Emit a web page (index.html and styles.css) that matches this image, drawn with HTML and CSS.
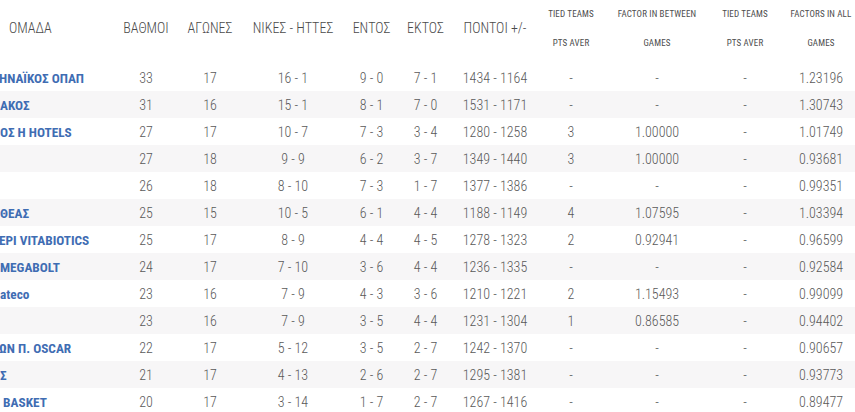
FILE: index.html
```html
<!DOCTYPE html>
<html lang="el">
<head>
<meta charset="utf-8">
<title>Βαθμολογία</title>
<link rel="stylesheet" href="styles.css">
</head>
<body>
<table class="standings">
  <colgroup>
    <col class="c-team"><col class="c-pts"><col class="c-gp"><col class="c-wl"><col class="c-home"><col class="c-away"><col class="c-score"><col class="c-tied"><col class="c-fbg"><col class="c-tied2"><col class="c-fall">
  </colgroup>
  <thead>
    <tr>
      <th class="team-h">ΟΜΑΔΑ</th>
      <th>ΒΑΘΜΟΙ</th>
      <th>ΑΓΩΝΕΣ</th>
      <th>ΝΙΚΕΣ - ΗΤΤΕΣ</th>
      <th>ΕΝΤΟΣ</th>
      <th>ΕΚΤΟΣ</th>
      <th>ΠΟΝΤΟΙ +/-</th>
      <th class="small"><span>TIED TEAMS</span><span>PTS AVER</span></th>
      <th class="small"><span>FACTOR IN BETWEEN</span><span>GAMES</span></th>
      <th class="small"><span>TIED TEAMS</span><span>PTS AVER</span></th>
      <th class="small"><span>FACTORS IN ALL</span><span>GAMES</span></th>
    </tr>
  </thead>
  <tbody>
    <tr><td class="team"><span class="cut c1">ΗΝΑΪΚΟΣ ΟΠΑΠ</span></td><td>33</td><td>17</td><td>16 - 1</td><td>9 - 0</td><td>7 - 1</td><td>1434 - 1164</td><td>-</td><td>-</td><td>-</td><td>1.23196</td></tr>
    <tr><td class="team"><span class="cut">ΑΚΟΣ</span></td><td>31</td><td>16</td><td>15 - 1</td><td>8 - 1</td><td>7 - 0</td><td>1531 - 1171</td><td>-</td><td>-</td><td>-</td><td>1.30743</td></tr>
    <tr><td class="team"><span class="cut">ΟΣ Η HOTELS</span></td><td>27</td><td>17</td><td>10 - 7</td><td>7 - 3</td><td>3 - 4</td><td>1280 - 1258</td><td>3</td><td>1.00000</td><td>-</td><td>1.01749</td></tr>
    <tr><td class="team"></td><td>27</td><td>18</td><td>9 - 9</td><td>6 - 2</td><td>3 - 7</td><td>1349 - 1440</td><td>3</td><td>1.00000</td><td>-</td><td>0.93681</td></tr>
    <tr><td class="team"></td><td>26</td><td>18</td><td>8 - 10</td><td>7 - 3</td><td>1 - 7</td><td>1377 - 1386</td><td>-</td><td>-</td><td>-</td><td>0.99351</td></tr>
    <tr><td class="team"><span class="cut">ΘΕΑΣ</span></td><td>25</td><td>15</td><td>10 - 5</td><td>6 - 1</td><td>4 - 4</td><td>1188 - 1149</td><td>4</td><td>1.07595</td><td>-</td><td>1.03394</td></tr>
    <tr><td class="team"><span class="cut c1">ΕΡΙ VITABIOTICS</span></td><td>25</td><td>17</td><td>8 - 9</td><td>4 - 4</td><td>4 - 5</td><td>1278 - 1323</td><td>2</td><td>0.92941</td><td>-</td><td>0.96599</td></tr>
    <tr><td class="team"><span class="cut">MEGABOLT</span></td><td>24</td><td>17</td><td>7 - 10</td><td>3 - 6</td><td>4 - 4</td><td>1236 - 1335</td><td>-</td><td>-</td><td>-</td><td>0.92584</td></tr>
    <tr><td class="team"><span class="cut">ateco</span></td><td>23</td><td>16</td><td>7 - 9</td><td>4 - 3</td><td>3 - 6</td><td>1210 - 1221</td><td>2</td><td>1.15493</td><td>-</td><td>0.99099</td></tr>
    <tr><td class="team"></td><td>23</td><td>16</td><td>7 - 9</td><td>3 - 5</td><td>4 - 4</td><td>1231 - 1304</td><td>1</td><td>0.86585</td><td>-</td><td>0.94402</td></tr>
    <tr><td class="team"><span class="cut c1">ΩΝ Π. OSCAR</span></td><td>22</td><td>17</td><td>5 - 12</td><td>3 - 5</td><td>2 - 7</td><td>1242 - 1370</td><td>-</td><td>-</td><td>-</td><td>0.90657</td></tr>
    <tr><td class="team"><span class="cut">Σ</span></td><td>21</td><td>17</td><td>4 - 13</td><td>2 - 6</td><td>2 - 7</td><td>1295 - 1381</td><td>-</td><td>-</td><td>-</td><td>0.93773</td></tr>
    <tr><td class="team"><span class="cut">&nbsp;BASKET</span></td><td>20</td><td>17</td><td>3 - 14</td><td>1 - 7</td><td>2 - 7</td><td>1267 - 1416</td><td>-</td><td>-</td><td>-</td><td>0.89477</td></tr>
  </tbody>
</table>
</body>
</html>
```

FILE: styles.css
```css
html, body {
  margin: 0;
  padding: 0;
  background: #ffffff;
  overflow: hidden;
}

body {
  font-family: "Roboto Condensed", Roboto, "Liberation Sans", sans-serif;
  color: #595959;
}

.standings {
  border-collapse: collapse;
  table-layout: fixed;
  width: 863px;
}

.c-team { width: 115px; }
.c-pts { width: 62px; }
.c-gp { width: 66px; }
.c-wl { width: 100px; }
.c-home { width: 57px; }
.c-away { width: 51px; }
.c-score { width: 88px; }
.c-tied { width: 64px; }
.c-fbg { width: 108px; }
.c-tied2 { width: 68px; }
.c-fall { width: 84px; }

.standings thead tr {
  height: 64px;
}

.standings th {
  font-weight: 300;
  font-size: 14px;
  color: #4a4a4a;
  text-align: center;
  vertical-align: top;
  padding: 20px 0 0;
  white-space: nowrap;
}

.standings th.team-h {
  text-align: left;
  padding-left: 9px;
}

.standings th.small {
  font-size: 9px;
  font-weight: 400;
  color: #4d4d4d;
  letter-spacing: 0.15px;
  padding-top: 9px;
}

.standings th.small span {
  display: block;
  line-height: 11px;
}

.standings th.small span + span {
  margin-top: 18px;
}

.standings tbody tr {
  height: 27px;
}

.standings tbody tr:nth-child(even) {
  background: #f7f6f7;
}

.standings td {
  font-size: 14px;
  font-weight: 300;
  text-align: center;
  vertical-align: middle;
  padding: 0;
  white-space: nowrap;
}

.standings td.team {
  text-align: left;
  overflow: hidden;
}

.cut {
  display: inline-block;
  font-weight: 700;
  color: #3f6db3;
  font-size: 13.3px;
}

.cut.c1 {
  margin-left: -1px;
}
```
